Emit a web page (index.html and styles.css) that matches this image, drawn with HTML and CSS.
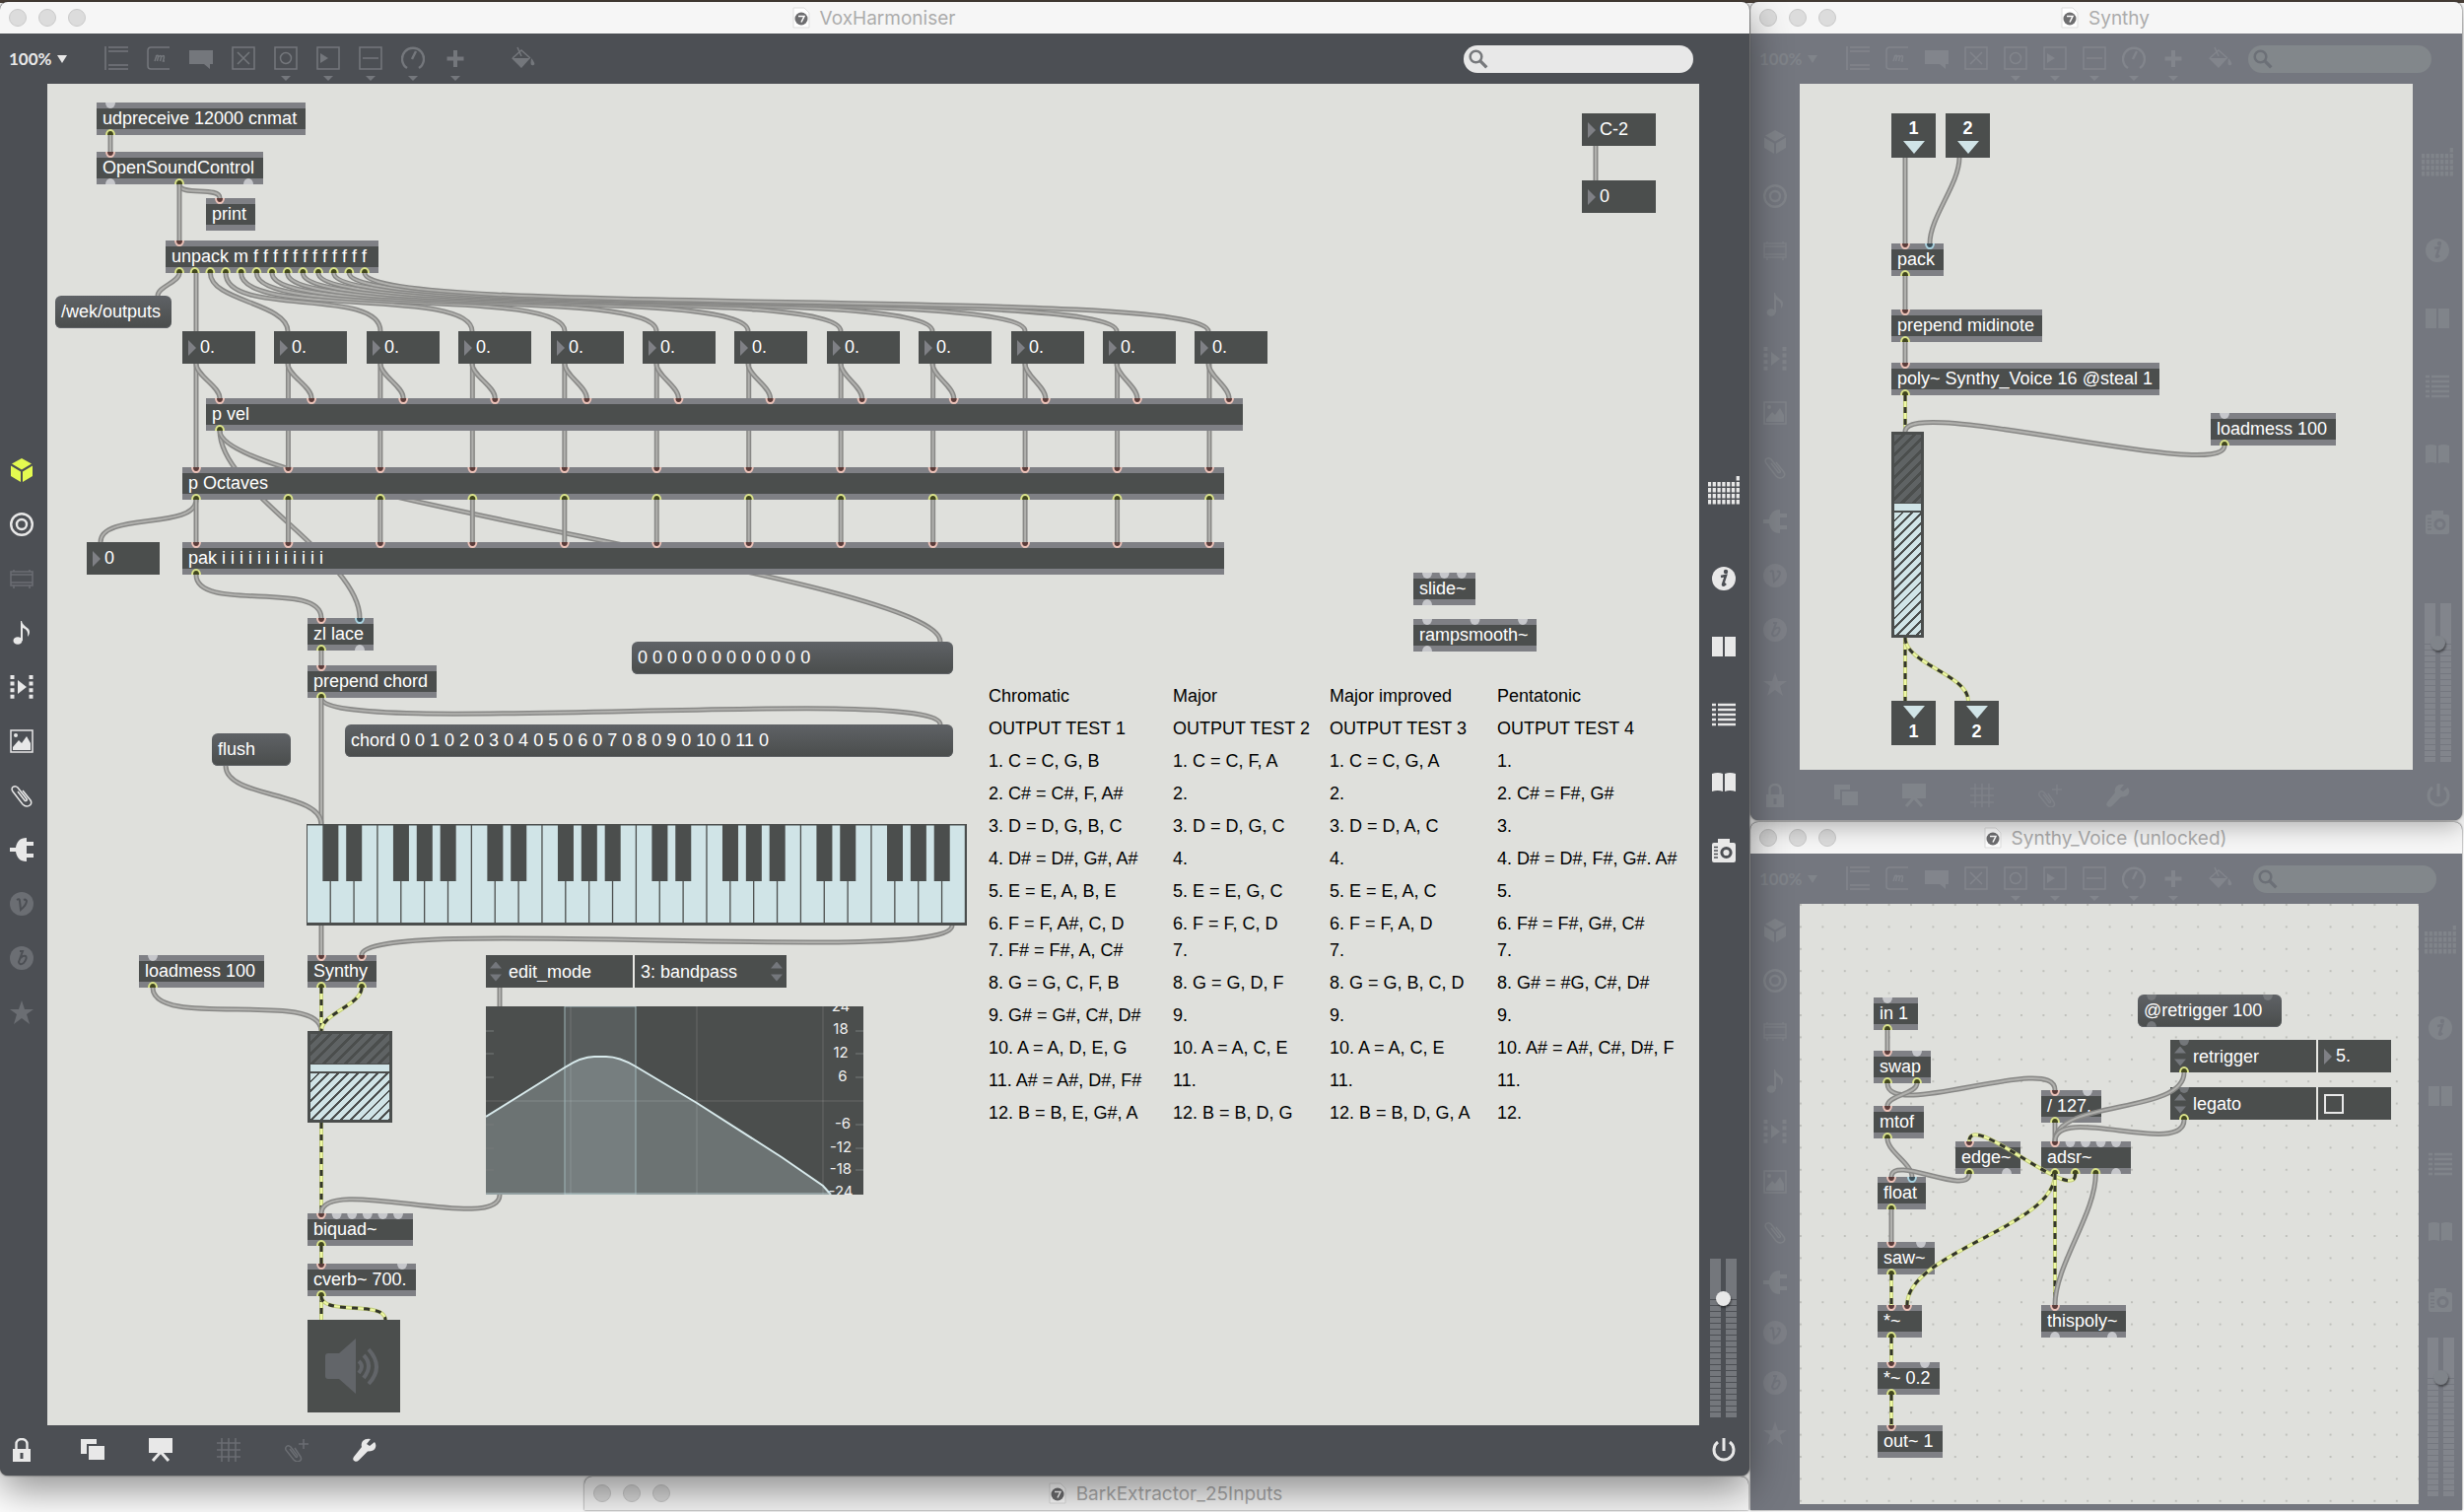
FILE: index.html
```html
<!DOCTYPE html>
<html lang="en">
<head>
    <meta charset="UTF-8">
    <meta name="viewport" content="width=device-width, initial-scale=1.0">
    <title>VoxHarmoniser</title>
    <link rel="stylesheet" href="styles.css">
</head>
<body>
    <svg class="sprite" aria-hidden="true">
        <symbol id="i-doc" viewBox="0 0 18 22"><path d="M1 1h11l5 5v15H1z" fill="#fff" stroke="#ddd"/><circle cx="9" cy="12" r="6.500" fill="#6e6e70"/><path d="M6 9.500h6l-3 6" fill="none" stroke="#fff" stroke-width="1.500"/></symbol>
        <symbol id="i-object" viewBox="0 0 24 24"><path d="M1 0v24M4 1h20M4 5h20M4 19h20M4 23h20" class="line"/></symbol>
        <symbol id="i-message" viewBox="0 0 24 24"><path d="M23 1H4a3 3 0 0 0-3 3v16a3 3 0 0 0 3 3h19M8 15l2-6M9 10q3-2 2.500 1l-1 4M11.500 11q3-3 3 0l-1 4M14.500 11q3-3 3 0l-1 4h1.500" class="line"/></symbol>
        <symbol id="i-comment" viewBox="0 0 24 24"><path d="M0 4h24v14h-3v5l-6-5H0z" fill="currentColor"/></symbol>
        <symbol id="i-toggle" viewBox="0 0 24 24"><path d="M1 1h22v22H1zM6 6l12 12M18 6L6 18" class="line"/></symbol>
        <symbol id="i-button" viewBox="0 0 24 24"><path d="M1 1h22v22H1z" class="line"/><circle cx="12" cy="12" r="5.500" class="line"/></symbol>
        <symbol id="i-number" viewBox="0 0 24 24"><path d="M1 1h22v22H1z" class="line"/><path d="M4 7l8 5-8 5z" fill="currentColor"/></symbol>
        <symbol id="i-slider" viewBox="0 0 24 24"><path d="M1 1h22v22H1zM4 12h16" class="line"/></symbol>
        <symbol id="i-dial" viewBox="0 0 24 24"><path d="M6 22A11 11 0 1 1 18 22M11 13l4-8" class="thick"/></symbol>
        <symbol id="i-plus" viewBox="0 0 24 24"><path d="M12 4v17M3.500 12.500h17" stroke="currentColor" stroke-width="4"/></symbol>
        <symbol id="i-bucket" viewBox="0 0 24 24"><path d="M0 12h19l-9 10zM20 12q5 6 2.500 7-3 1-3-2z" fill="currentColor"/><path d="M1 12l9-8 9 8M6 1l4 9" class="line"/></symbol>
        <symbol id="i-search" viewBox="0 0 24 24"><circle cx="9" cy="9" r="7" fill="none" stroke="currentColor" stroke-width="3"/><path d="M14 14l8 8" stroke="currentColor" stroke-width="4"/></symbol>

        <symbol id="i-cube" viewBox="0 0 24 24"><path d="M12 0l10 5.500-10 6-10-6zM1 7.500l10 6V24L1 18zM23 7.500l-10 6V24l10-6z" fill="currentColor"/></symbol>
        <symbol id="i-target" viewBox="0 0 24 24"><circle cx="12" cy="12" r="10.800" class="thick"/><circle cx="12" cy="12" r="5" class="thick"/></symbol>
        <symbol id="i-drawer" viewBox="0 0 24 24"><path d="M1 5h22v14H1zM1 8h22M1 16h22M4 5V3M20 5V3M4 19v3M20 19v3" class="line"/></symbol>
        <symbol id="i-note" viewBox="0 0 24 24"><ellipse cx="8" cy="20" rx="4.500" ry="3.800" fill="currentColor"/><path d="M11 20V0h1c1 6 8 6 8 11 0 2-1 4-2 5 1-6-2-8-5-9v13z" fill="currentColor"/></symbol>
        <symbol id="i-film" viewBox="0 0 24 24"><path d="M2.500 0v24M21.500 0v24" stroke="currentColor" stroke-width="4" stroke-dasharray="4 2.600"/><path d="M8 5l9 7-9 7z" fill="currentColor"/></symbol>
        <symbol id="i-image" viewBox="0 0 24 24"><path d="M1 1h22v22H1z" class="line"/><circle cx="6" cy="6" r="2" fill="currentColor"/><path d="M3 21v-3l6-7 3 3 5-7 4 7v7z" fill="currentColor"/></symbol>
        <symbol id="i-clip" viewBox="0 0 24 24"><path d="M8 8l7 9c1 1.500 3 0 2-1.500L8 4C5 1 0 4 3 8l10 13c4 4 11 1 8-4L13 7" class="line"/></symbol>
        <symbol id="i-plug" viewBox="0 0 24 24"><path d="M17 0v4h7v4h-7v8h7v4h-7v4C10 24 7 20 6 14H0v-4h6c1-6 4-10 11-10z" fill="currentColor"/></symbol>
        <symbol id="i-v" viewBox="0 0 24 24"><circle cx="12" cy="12" r="12" fill="currentColor"/><path d="M7 8q3-2 3 1l1 9q6-5 6-9-1-2-3-1" fill="none" stroke="var(--bar)" stroke-width="2"/></symbol>
        <symbol id="i-b" viewBox="0 0 24 24"><circle cx="12" cy="12" r="12" fill="currentColor"/><path d="M10 5h3L9 16q1 4 5 1 4-5 2-7-3-1-5 2" fill="none" stroke="var(--bar)" stroke-width="2"/></symbol>
        <symbol id="i-star" viewBox="0 0 24 24"><path d="M12 0l3 9h9l-7 5 3 10-8-6-8 6 3-10-7-5h9z" fill="currentColor"/></symbol>

        <symbol id="i-keypad" viewBox="0 0 32 32"><path d="M1.500 6v24M6.300 6v24M11.100 6v24M15.900 6v24M20.700 6v24M25.500 6v24M30.300 0v30" stroke="currentColor" stroke-width="3.300" stroke-dasharray="4.600 1.400"/></symbol>
        <symbol id="i-info" viewBox="0 0 24 24"><circle cx="12" cy="12" r="12" fill="currentColor"/><circle cx="14" cy="5" r="2.200" fill="var(--bar)"/><path d="M9 10l5-1-3 9q0 2 3-1" fill="none" stroke="var(--bar)" stroke-width="2.500"/></symbol>
        <symbol id="i-columns" viewBox="0 0 24 24"><path d="M0 2h11v20H0zM13 2h11v20H13z" fill="currentColor"/></symbol>
        <symbol id="i-list" viewBox="0 0 24 24"><path d="M0 2h4M6 2h18M0 7h4M6 7h18M0 12h4M6 12h18M0 17h4M6 17h18M0 22h4M6 22h18" stroke="currentColor" stroke-width="2.500"/></symbol>
        <symbol id="i-book" viewBox="0 0 24 24"><path d="M0 3q6-2 11 0v18q-5-2-11 0zM13 3q5-2 11 0v18q-6-2-11 0z" fill="currentColor"/></symbol>
        <symbol id="i-camera" viewBox="0 0 24 24"><path d="M6 0h12v4h4q2 0 2 2v16q0 2-2 2H2q-2 0-2-2V6q0-2 2-2h4z" fill="currentColor"/><circle cx="14.500" cy="14" r="4.600" fill="none" stroke="var(--bar)" stroke-width="3"/><path d="M2 8.500h4M2 12h4M2 15.500h4M2 19h4" stroke="var(--bar)" stroke-width="1.500"/></symbol>
        <symbol id="i-power" viewBox="0 0 24 24"><path d="M12 0v13M6 4a10 10 0 1 0 12 0" fill="none" stroke="currentColor" stroke-width="3"/></symbol>

        <symbol id="i-lock" viewBox="0 0 24 24"><path d="M3 11h18v13H3z" fill="currentColor"/><path d="M6.500 11V6a5.500 5 0 0 1 11 0v5" class="thick"/><path d="M12 15v6" stroke="var(--bar)" stroke-width="3"/></symbol>
        <symbol id="i-windows" viewBox="0 0 24 24"><path d="M0 1h16v5H6v10H0z" fill="currentColor"/><path d="M8 8h16v14H8z" fill="currentColor"/></symbol>
        <symbol id="i-board" viewBox="0 0 24 24"><path d="M0 0h24v15H0z" fill="currentColor"/><path d="M12 14l-8 9M12 14l8 9" stroke="currentColor" stroke-width="3"/></symbol>
        <symbol id="i-grid" viewBox="0 0 24 24"><path d="M5 0v24M12 0v24M19 0v24M0 5h24M0 12h24M0 19h24" class="line"/></symbol>
        <symbol id="i-clipplus" viewBox="0 0 24 24"><path d="M5 11l6 8c1 1 2 0 1.500-1.500L6 9C3 6 0 9 1 12l8 10c4 4 9 1 7-3L10 10M19 1v10M14 6h10" class="line"/></symbol>
        <symbol id="i-wrench" viewBox="0 0 24 24"><path d="M22 4l-5 4-3-2 4-5q-5-1-8 2-2 3-1 6L1 19q-2 3 1 4.500 2 1 4-1l9-9q7 0 8-4 1-3-1-5.500z" fill="currentColor"/></symbol>
    </svg>

    <main class="desktop">
        <section class="window bark">
            <header class="titlebar"><i class="light"></i><i class="light"></i><i class="light"></i><h2><svg class="doc"><use href="#i-doc"/></svg>BarkExtractor_25Inputs</h2></header>
        </section>

        <section class="window inactive voice" data-patch="voice">
            <header class="titlebar"><i class="light"></i><i class="light"></i><i class="light"></i><h2><svg class="doc"><use href="#i-doc"/></svg>Synthy_Voice (unlocked)</h2></header>
        </section>

        <section class="window inactive synthy" data-patch="synthy">
            <header class="titlebar"><i class="light"></i><i class="light"></i><i class="light"></i><h2><svg class="doc"><use href="#i-doc"/></svg>Synthy</h2></header>
        </section>

        <section class="window vox" data-patch="vox">
            <header class="titlebar"><i class="light"></i><i class="light"></i><i class="light"></i><h1><svg class="doc"><use href="#i-doc"/></svg>VoxHarmoniser</h1></header>
        </section>
    </main>

    <template id="notes">
        <table class="notes">
            <tr><th>Chromatic</th><th>Major</th><th>Major improved</th><th>Pentatonic</th></tr>
            <tr><td>OUTPUT TEST 1</td><td>OUTPUT TEST 2</td><td>OUTPUT TEST 3</td><td>OUTPUT TEST 4</td></tr>
            <tr><td>1. C = C, G, B</td><td>1. C = C, F, A</td><td>1. C = C, G, A</td><td>1.</td></tr>
            <tr><td>2. C# = C#, F, A#</td><td>2.</td><td>2.</td><td>2. C# = F#, G#</td></tr>
            <tr><td>3. D = D, G, B, C</td><td>3. D = D, G, C</td><td>3. D = D, A, C</td><td>3.</td></tr>
            <tr><td>4. D# = D#, G#, A#</td><td>4.</td><td>4.</td><td>4. D# = D#, F#, G#. A#</td></tr>
            <tr><td>5. E = E, A, B, E</td><td>5. E = E, G, C</td><td>5. E = E, A, C</td><td>5.</td></tr>
            <tr><td>6. F = F, A#, C, D</td><td>6. F = F, C, D</td><td>6. F = F, A, D</td><td>6. F# = F#, G#, C#</td></tr>
            <tr class="tight"><td>7. F# = F#, A, C#</td><td>7.</td><td>7.</td><td>7.</td></tr>
            <tr><td>8. G = G, C, F, B</td><td>8. G = G, D, F</td><td>8. G = G, B, C, D</td><td>8. G# = #G, C#, D#</td></tr>
            <tr><td>9. G# = G#, C#, D#</td><td>9.</td><td>9.</td><td>9.</td></tr>
            <tr><td>10. A = A, D, E, G</td><td>10. A = A, C, E</td><td>10. A = A, C, E</td><td>10. A# = A#, C#, D#, F</td></tr>
            <tr><td>11. A# = A#, D#, F#</td><td>11.</td><td>11.</td><td>11.</td></tr>
            <tr><td>12. B = B, E, G#, A</td><td>12. B = B, D, G</td><td>12. B = B, D, G, A</td><td>12.</td></tr>
        </table>
    </template>

    <template id="graph">
        <svg class="graph" viewBox="0 0 383 191" role="img" aria-label="Bandpass filter response">
            <path d="M0 112L80 62Q97 51 110 51h12Q135 51 152 61L214 98 300 153 342 182 350 191H0z" fill="#6c7373"/>
            <path d="M86 0v191M214 0v191M342 0v191M0 96h383" stroke="#fff" stroke-opacity=".16"/>
            <path d="M0 25h8M0 48h8M0 72h8M0 120h8M0 144h8M0 166h8M375 25h8M375 48h8M375 72h8M375 120h8M375 144h8M375 166h8" stroke="#777a7a"/>
            <path d="M80 0h72v191H80z" fill="#d0e4e7" fill-opacity=".1" stroke="#9fb6b9"/>
            <path d="M0 112L80 62Q97 51 110 51h12Q135 51 152 61L214 98 300 153 342 182 350 191" fill="none" stroke="#d8eaec" stroke-width="2"/>
            <path d="M0 190h350" stroke="#b9cdd0" stroke-width="1"/>
            <g class="scale">
                <text x="360" y="5">24</text><text x="360" y="28">18</text><text x="360" y="52">12</text><text x="362" y="76">6</text>
                <text x="362" y="124">-6</text><text x="360" y="148">-12</text><text x="360" y="170">-18</text><text x="360" y="193">-24</text>
            </g>
        </svg>
    </template>

    <script src="patcher.js"></script>
</body>
</html>
```
FILE: styles.css
```css
* {
    box-sizing: border-box;
}
body {
    margin: 0;
    font-family: "Liberation Sans", Arial, sans-serif;
    font-size: 18px;
    color: #fff;
}
button, input, select {
    margin: 0;
    padding: 0;
    border: none;
    background: none;
    color: inherit;
    font: inherit;
    appearance: none;
}
.sprite {
    display: none;
}
.line {
    fill: none;
    stroke: currentColor;
    stroke-width: 1.5;
}
.thick {
    fill: none;
    stroke: currentColor;
    stroke-width: 2.4;
}

/* windows */
.desktop {
    position: relative;
    height: 100vh;
    overflow: hidden;
    background: linear-gradient(#4a4038 3px, #fff 3px);
}
.window {
    --bar: #4c4f54;
    --icon: #e8e8e8;
    --faint: #6b6e73;
    --tool: #74777c;
    --search: #e8e8e8;
    --pitch: 55px;
    position: absolute;
    display: grid;
    grid-template-columns: 48px 1fr 51px;
    grid-template-rows: 32px 51px 1fr 51px;
    grid-template-areas: "title title title" "top top top" "left patch right" "bottom bottom bottom";
    background: var(--bar);
    border-radius: 8px;
    overflow: hidden;
}
.inactive {
    --bar: #74777f;
    --icon: #80848a;
    --faint: #7e8188;
    --tool: #82858c;
    --search: #82878b;
    grid-template-columns: 50px 1fr 50px;
}
.vox {
    left: 0;
    top: 2px;
    width: 71%;
    bottom: 37px;
    box-shadow: 0 0 2px #222, 0 14px 42px rgba(0, 0, 0, .45);
}
.synthy {
    left: 71.04%;
    right: 2px;
    top: 2px;
    height: 830px;
    box-shadow: 0 0 2px #333, 0 6px 24px rgba(0, 0, 0, .3);
}
.voice {
    --pitch: 51px;
    left: 71.04%;
    right: 2px;
    top: 834px;
    bottom: 2px;
    grid-template-columns: 50px 1fr 44px;
    grid-template-rows: 32px 51px 1fr 6px;
    border-radius: 8px 8px 0 0;
    box-shadow: 0 0 2px #333;
}
.bark {
    left: 593px;
    right: 29.04%;
    bottom: 2px;
    height: 34px;
    display: block;
    border-radius: 8px 8px 0 0;
    box-shadow: 0 0 2px #444;
}
.titlebar {
    grid-area: title;
    position: relative;
    display: flex;
    align-items: center;
    gap: 12px;
    height: 100%;
    padding-left: 9px;
    background: #f6f6f6;
}
.light {
    width: 18px;
    height: 18px;
    border: 1px solid #c9c9c9;
    border-radius: 50%;
    background: #dcdcdc;
}
.titlebar h1, .titlebar h2 {
    flex: 1;
    display: flex;
    justify-content: center;
    align-items: center;
    gap: 10px;
    margin: 0;
    padding-right: 101px;
    font: 19px Inter, sans-serif;
    color: #acacac;
}
.doc {
    width: 18px;
    height: 22px;
}

/* toolbars */
.top {
    grid-area: top;
    display: flex;
    align-items: center;
    padding: 0 57px 0 9px;
    color: var(--tool);
}
.inactive .top {
    padding-right: 31px;
}
.voice .top {
    padding-right: 26px;
}
.zoom {
    display: flex;
    align-items: center;
    margin-right: 28px;
    font: bold 17px Lato, sans-serif;
    color: var(--icon);
}
.inactive .zoom {
    margin-right: 21px;
}
.zoom select {
    width: 49px;
}
.tri {
    width: 0;
    border: 5px solid transparent;
    border-top: 8px solid currentColor;
    border-bottom: none;
}
.tools {
    display: flex;
}
.tool {
    position: relative;
    width: 43px;
    height: 51px;
    padding-bottom: 1px;
}
.inactive .tool {
    width: 40px;
}
.tool .tri {
    position: absolute;
    left: 50%;
    bottom: 3px;
    margin-left: -5px;
    border-top-width: 5px;
}
.icon {
    display: block;
    width: 24px;
    height: 24px;
    margin: auto;
}
.tool.bucket {
    margin-left: 26px;
}
.inactive .tool.bucket {
    margin-left: 8px;
}
.search {
    display: flex;
    flex: none;
    align-items: center;
    width: 233px;
    height: 28px;
    margin-left: auto;
    padding-left: 5px;
    border-radius: 14px;
    background: var(--search);
    color: #77797c;
}
.inactive .search {
    width: 186px;
    color: #6c7077;
}
.search svg {
    width: 20px;
    height: 20px;
}
.search input {
    flex: 1;
    min-width: 0;
}
.left, .right {
    display: flex;
    flex-direction: column;
    align-items: center;
    justify-content: center;
    min-height: 0;
    color: var(--icon);
}
.left {
    grid-area: left;
    padding-bottom: 28px;
}
.vox .left {
    padding-right: 4px;
}
.voice .left {
    padding-bottom: 46px;
}
.left button {
    height: var(--pitch);
    flex: none;
}
.right {
    grid-area: right;
    padding-bottom: 7px;
}
.vox .right {
    padding-right: 2px;
}
.panels {
    flex: 1;
    display: flex;
    flex-direction: column;
    align-items: center;
    justify-content: center;
    gap: 45px;
    padding-bottom: 5px;
}
.panels button:first-child {
    margin-bottom: 15px;
}
.panels .i-keypad {
    width: 32px;
    height: 32px;
}
.faint {
    color: var(--faint);
}
.vox .cube {
    color: #e4fa50;
}
.meter {
    position: relative;
    display: flex;
    gap: 5px;
    width: 27px;
    height: 162px;
}
.meter i {
    flex: 1;
    background: linear-gradient(var(--tool) 36px, transparent 36px), repeating-linear-gradient(var(--tool) 0 5px, var(--bar) 5px 6px);
}
.meter input, .gain input {
    position: absolute;
    inset: 0;
    width: 100%;
    height: 100%;
    opacity: 0;
    writing-mode: vertical-lr;
}
.knob {
    position: absolute;
    left: 6px;
    top: 33px;
    width: 15px;
    height: 15px;
    border-radius: 50%;
    background: var(--icon);
    box-shadow: 1px 2px 2px rgba(0, 0, 0, .4);
}
.bottom {
    grid-area: bottom;
    display: flex;
    align-items: center;
    gap: 45px;
    padding: 0 14px 1px 10px;
    color: var(--icon);
}
.inactive .bottom {
    padding: 0 12px 0 13px;
}
.voice .bottom {
    display: none;
}
.bottom button:first-child {
    margin-right: 3px;
}
.bottom button:last-child {
    margin-left: auto;
}

/* patch canvas */
.patch {
    grid-area: patch;
    position: relative;
    overflow: hidden;
    background: #dfe0dc;
}
.layer {
    position: absolute;
    inset: 0;
    width: 100%;
    height: 100%;
    pointer-events: none;
}
.cord {
    fill: none;
    stroke: #888886;
    stroke-width: 5;
}
.cord.core {
    stroke: #b0b0ad;
    stroke-width: 2;
}
.signal {
    fill: none;
    stroke: #c3cd7c;
    stroke-width: 4;
}
.signal.core {
    stroke: #eef8a4;
    stroke-width: 2;
}
.signal.dash {
    stroke: #33352b;
    stroke-width: 3;
    stroke-dasharray: 6 6;
}
.port {
    fill: #c6c7cb;
}
.port.soft {
    fill: #74777a;
}
.port.in {
    fill: #5a3c3a;
    stroke: #ecc2b8;
    stroke-width: 2;
}
.port.cold {
    fill: #3c4e58;
    stroke: #a9d3e0;
}
.port.out {
    fill: #41461f;
    stroke: #dbe48a;
    stroke-width: 2;
}
.node {
    position: absolute;
    height: 33px;
    background: #4b4e4d;
    color: #fff;
    text-align: left;
    white-space: nowrap;
}
.obj {
    padding: 0 6px;
    border: solid #7f8085;
    border-width: 6px 0;
    line-height: 21px;
}
.msg {
    padding: 0 6px;
    border-radius: 6px;
    background: linear-gradient(#5f6266, #4a4d4c);
    box-shadow: inset 0 -1px #5f6266;
}
.num, .attr {
    display: flex;
    align-items: center;
}
.num::before, .attr .value.number::before {
    content: "";
    flex: none;
    margin: 0 4px 0 6px;
    border: 8px solid transparent;
    border-left-color: #7f8085;
    border-right: none;
}
.num input, .attr .value input[type=text] {
    width: 100%;
    min-width: 0;
}
.attr::before, .attr .menu::after {
    content: "";
    flex: none;
    width: 12px;
    height: 20px;
    margin-left: 4px;
    background: #74777c;
    clip-path: polygon(50% 0, 100% 35%, 0 35%, 0 65%, 100% 65%, 50% 100%, 0 65%, 0 35%);
}
.attr .name {
    flex: 1;
    min-width: 0;
    padding-left: 7px;
}
.attr .value {
    display: flex;
    align-items: center;
    height: 100%;
    border-left: 2px solid #e8e8e4;
}
.attr .menu select {
    flex: 1;
    padding-left: 6px;
}
.attr .menu::after {
    margin-right: 4px;
}
.attr input[type=checkbox] {
    width: 20px;
    height: 20px;
    margin-left: 6px;
    border: 2px solid #e8e8e8;
}
.io {
    display: flex;
    flex-direction: column;
    align-items: center;
    justify-content: center;
    gap: 3px;
    font-weight: bold;
    line-height: 20px;
}
.io::after {
    content: "";
    border: 11px solid transparent;
    border-top: 13px solid #d0e4e7;
    border-bottom: none;
}
.io.outlet {
    flex-direction: column-reverse;
}
.gain {
    display: flex;
    flex-direction: column;
    padding: 3px;
}
.gain .off {
    height: 34%;
    background: repeating-linear-gradient(135deg, #5f6364 0 5px, #4b4e4d 5px 8px);
}
.gain .level {
    height: 7px;
    margin: 1px 0 2px;
    background: #d0e4e7;
}
.gain .on {
    flex: 1;
    background: repeating-linear-gradient(135deg, #d0e4e7 0 5px, #4b4e4d 5px 7px);
}
.keys, .filter {
    background: #4b4e4d;
}
.keys svg, .graph, .dac svg {
    display: block;
    width: 100%;
    height: 100%;
}
.scale {
    fill: #f0f0f0;
    font: 15px Inter, sans-serif;
    text-anchor: middle;
}
.dac {
    color: #626569;
}
.notes {
    position: absolute;
    border-collapse: collapse;
    table-layout: fixed;
    width: 720px;
    color: #000;
    text-align: left;
    white-space: nowrap;
}
.notes th, .notes td {
    height: 33px;
    padding: 0;
    font-weight: normal;
}
.notes th:nth-child(1) {
    width: 187px;
}
.notes th:nth-child(2) {
    width: 159px;
}
.notes th:nth-child(3) {
    width: 170px;
}
.notes .tight td {
    height: 27px;
    vertical-align: top;
}
```
FILE: patcher.js
```js
var SVG = 'http://www.w3.org/2000/svg';

// n port offsets spaced evenly between first and last
function spread(n, first, last) {
    var list = [];
    for (var i = 0; i < n; i++) list.push(first + (last - first) * i / (n - 1));
    return list;
}

var P = [14];
var twelve = spread(12, 14, 1042);

var patches = {
    vox: {
        origin: [48, 85],
        nodes: {
            udp: { type: 'obj', x: 98, y: 104, w: 212, text: 'udpreceive 12000 cnmat', ins: P, outs: P },
            osc: { type: 'obj', x: 98, y: 154, w: 169, text: 'OpenSoundControl', ins: P, outs: [14, 84, 154] },
            print: { type: 'obj', x: 209, y: 201, w: 50, text: 'print', ins: P },
            unpack: { type: 'obj', x: 168, y: 244, w: 216, text: 'unpack m f f f f f f f f f f f f', ins: P, outs: spread(13, 14, 202) },
            wek: { type: 'msg', x: 56, y: 300, w: 118, text: '/wek/outputs', ins: [104] },
            vel: { type: 'obj', x: 209, y: 404, w: 1052, text: 'p vel', ins: spread(12, 14, 1038), outs: P },
            oct: { type: 'obj', x: 185, y: 474, w: 1057, text: 'p Octaves', ins: twelve, outs: twelve },
            pak: { type: 'obj', x: 185, y: 550, w: 1057, text: 'pak i i i i i i i i i i i i', ins: twelve, outs: P },
            first: { type: 'num', x: 88, y: 550, w: 74, text: '0' },
            zl: { type: 'obj', x: 312, y: 627, w: 67, text: 'zl lace', ins: [14, 53], outs: [14, 53], cold: 1 },
            prepend: { type: 'obj', x: 312, y: 675, w: 131, text: 'prepend chord', ins: P, outs: P },
            vels: { type: 'msg', x: 641, y: 651, w: 326, text: '0 0 0 0 0 0 0 0 0 0 0 0', ins: [313] },
            chord: { type: 'msg', x: 350, y: 735, w: 617, text: 'chord 0 0 1 0 2 0 3 0 4 0 5 0 6 0 7 0 8 0 9 0 10 0 11 0', ins: [604] },
            flush: { type: 'msg', x: 215, y: 744, w: 80, text: 'flush' },
            keys: { type: 'keys', x: 311, y: 836, w: 670, h: 103, ins: [15], outs: [15, 655] },
            load: { type: 'obj', x: 141, y: 969, w: 127, text: 'loadmess 100', ins: P, outs: P },
            synthy: { type: 'obj', x: 312, y: 969, w: 70, text: 'Synthy', ins: [14, 55], outs: [14, 55] },
            gain: { type: 'gain', x: 312, y: 1046, w: 86, h: 93 },
            mode: { type: 'attr', x: 493, y: 969, w: 305, text: 'edit_mode', value: '3: bandpass', kind: 'menu', split: 156 },
            filter: { type: 'filter', x: 493, y: 1021, w: 383, h: 191 },
            biquad: { type: 'obj', x: 312, y: 1231, w: 107, text: 'biquad~', ins: spread(6, 14, 92), outs: P },
            cverb: { type: 'obj', x: 312, y: 1282, w: 110, text: 'cverb~ 700.', ins: [14, 96], outs: P },
            dac: { type: 'dac', x: 312, y: 1339, w: 94, h: 94, ins: [14, 79] },
            slide: { type: 'obj', x: 1434, y: 581, w: 63, text: 'slide~', ins: spread(3, 14, 49), outs: P },
            ramp: { type: 'obj', x: 1434, y: 628, w: 125, text: 'rampsmooth~', ins: spread(3, 14, 111), outs: P },
            pitch: { type: 'num', x: 1605, y: 115, w: 75, text: 'C-2' },
            pitchOut: { type: 'num', x: 1605, y: 183, w: 75, text: '0' },
            notes: { type: 'notes', x: 1003, y: 690 }
        },
        cords: [
            ['udp', 0, 'osc', 0], ['osc', 1, 'print', 0], ['osc', 1, 'unpack', 0], ['unpack', 0, 'wek', 0],
            ['vel', 0, 'zl', 1], ['vel', 0, 'vels', 0], ['oct', 0, 'first', 0],
            ['pak', 0, 'zl', 0], ['zl', 0, 'prepend', 0], ['prepend', 0, 'chord', 0], ['prepend', 0, 'keys', 0],
            ['flush', 0, 'keys', 0], ['keys', 0, 'synthy', 0], ['keys', 1, 'synthy', 1],
            ['load', 0, 'gain', 0], ['synthy', 0, 'gain', 0, 1], ['synthy', 1, 'gain', 0, 1],
            ['gain', 0, 'biquad', 0, 1], ['mode', 0, 'filter', 0], ['filter', 0, 'biquad', 0],
            ['biquad', 0, 'cverb', 0, 1], ['cverb', 0, 'dac', 0, 1], ['cverb', 0, 'dac', 1, 1],
            ['pitch', 0, 'pitchOut', 0]
        ]
    },
    synthy: {
        origin: [1826, 85],
        nodes: {
            in1: { type: 'io', x: 1919, y: 115, w: 45, h: 45, text: '1' },
            in2: { type: 'io', x: 1974, y: 115, w: 45, h: 45, text: '2' },
            pack: { type: 'obj', x: 1919, y: 247, w: 53, text: 'pack', ins: [14, 39], outs: P, cold: 1 },
            midi: { type: 'obj', x: 1919, y: 314, w: 153, text: 'prepend midinote', ins: P, outs: P },
            poly: { type: 'obj', x: 1919, y: 368, w: 272, text: 'poly~ Synthy_Voice 16 @steal 1', ins: P, outs: P },
            load: { type: 'obj', x: 2243, y: 419, w: 127, text: 'loadmess 100', ins: P, outs: P },
            gain: { type: 'gain', x: 1919, y: 438, w: 33, h: 209 },
            out1: { type: 'io', cls: 'outlet', x: 1919, y: 711, w: 45, h: 45, text: '1' },
            out2: { type: 'io', cls: 'outlet', x: 1983, y: 711, w: 45, h: 45, text: '2' }
        },
        cords: [
            ['in1', 0, 'pack', 0], ['in2', 0, 'pack', 1], ['pack', 0, 'midi', 0], ['midi', 0, 'poly', 0],
            ['poly', 0, 'gain', 0, 1], ['load', 0, 'gain', 0], ['gain', 0, 'out1', 0, 1], ['gain', 0, 'out2', 0, 1]
        ]
    },
    voice: {
        origin: [1826, 917],
        unlocked: true,
        nodes: {
            in1: { type: 'obj', x: 1901, y: 1012, w: 45, text: 'in 1', ins: P, outs: P },
            swap: { type: 'obj', x: 1901, y: 1066, w: 58, text: 'swap', ins: [14, 44], outs: [14, 44] },
            mtof: { type: 'obj', x: 1901, y: 1122, w: 51, text: 'mtof', ins: P, outs: P },
            div: { type: 'obj', x: 2071, y: 1106, w: 61, text: '/ 127.', ins: [14, 47], outs: P },
            edge: { type: 'obj', x: 1984, y: 1158, w: 66, text: 'edge~', ins: P, outs: [14, 52] },
            adsr: { type: 'obj', x: 2071, y: 1158, w: 91, text: 'adsr~', ins: spread(5, 14, 76), outs: spread(4, 14, 76) },
            float: { type: 'obj', x: 1905, y: 1194, w: 49, text: 'float', ins: [14, 35], outs: P, cold: 1 },
            saw: { type: 'obj', x: 1905, y: 1260, w: 58, text: 'saw~', ins: [14, 44], outs: P },
            mul: { type: 'obj', x: 1905, y: 1324, w: 45, text: '*~', ins: [14, 30], outs: P },
            amp: { type: 'obj', x: 1905, y: 1382, w: 63, text: '*~ 0.2', ins: [14, 48], outs: P },
            out: { type: 'obj', x: 1905, y: 1446, w: 66, text: 'out~ 1', ins: P },
            poly: { type: 'obj', x: 2071, y: 1324, w: 86, text: 'thispoly~', ins: P, outs: [14, 72] },
            msg: { type: 'msg', x: 2169, y: 1009, w: 146, text: '@retrigger 100', ins: [14, 132], outs: P },
            retrig: { type: 'attr', x: 2202, y: 1055, w: 224, text: 'retrigger', value: '5.', kind: 'number', split: 76, ins: P, outs: P },
            legato: { type: 'attr', x: 2202, y: 1103, w: 224, text: 'legato', kind: 'check', split: 76, ins: P, outs: P }
        },
        cords: [
            ['in1', 0, 'swap', 0], ['swap', 0, 'div', 0], ['swap', 1, 'mtof', 0], ['mtof', 0, 'float', 1],
            ['edge', 0, 'float', 0], ['float', 0, 'saw', 0], ['saw', 0, 'mul', 0, 1], ['mul', 0, 'amp', 0, 1],
            ['amp', 0, 'out', 0, 1], ['div', 0, 'adsr', 0], ['retrig', 0, 'adsr', 0], ['legato', 0, 'adsr', 0],
            ['adsr', 1, 'edge', 0, 1], ['adsr', 0, 'mul', 1, 1], ['adsr', 0, 'poly', 0, 1], ['adsr', 2, 'poly', 0]
        ]
    }
};

// the twelve float boxes between unpack, p vel and p Octaves
for (var i = 0; i < 12; i++) {
    patches.vox.nodes['f' + i] = { type: 'num', x: 185 + Math.round(i * 93.4), y: 336, w: 74, text: '0.' };
    patches.vox.cords.push(['unpack', i + 1, 'f' + i, 0], ['f' + i, 0, 'oct', i], ['f' + i, 0, 'vel', i], ['oct', i, 'pak', i]);
}

function icon(name) {
    return '<svg class="icon i-' + name + '"><use href="#i-' + name + '"/></svg>';
}

function buttons(names, faint) {
    return names.map(function (n) {
        var cls = n + (faint.indexOf(n) >= 0 ? ' faint' : '');
        return '<button class="' + cls + '" aria-label="' + n + '">' + icon(n) + '</button>';
    }).join('');
}

function chrome() {
    var menus = ['button', 'number', 'slider', 'dial', 'plus'];
    var tools = ['object', 'message', 'comment', 'toggle'].concat(menus, 'bucket').map(function (n) {
        return '<button class="tool ' + n + '" aria-label="' + n + '">' + icon(n) +
            (menus.indexOf(n) >= 0 ? '<span class="tri"></span>' : '') + '</button>';
    }).join('');
    return '<nav class="top"><label class="zoom"><select aria-label="Zoom"><option>100%</option></select><span class="tri"></span></label>' +
        '<div class="tools">' + tools + '</div>' +
        '<label class="search"><svg><use href="#i-search"/></svg><input type="text" aria-label="Search"></label></nav>' +
        '<nav class="left">' + buttons(['cube', 'target', 'drawer', 'note', 'film', 'image', 'clip', 'plug', 'v', 'b', 'star'], ['drawer', 'v', 'b', 'star']) + '</nav>' +
        '<nav class="right"><div class="panels">' + buttons(['keypad', 'info', 'columns', 'list', 'book', 'camera'], []) + '</div>' +
        '<div class="meter"><i></i><i></i><span class="knob"></span><input type="range" aria-label="Output level"></div></nav>' +
        '<nav class="bottom">' + buttons(['lock', 'windows', 'board', 'grid', 'clipplus', 'wrench', 'power'], ['grid', 'clipplus']) + '</nav>';
}

function keyboard() {
    var s = '<svg viewBox="0 0 670 103" role="img" aria-label="Keyboard">';
    var k = 23.86;
    for (var i = 0; i < 28; i++) {
        s += '<rect x="' + (i * k + 1) + '" y="1.500" width="' + (k - 1.3) + '" height="98.500" fill="#d0e4e7"/>';
    }
    for (i = 0; i < 28; i++) {
        if (i % 7 != 2 && i % 7 != 6) {
            s += '<rect x="' + ((i + 1) * k - 7.5) + '" y="0" width="16" height="58" fill="#4b4e4d"/>';
        }
    }
    return s + '</svg>';
}

function build(n) {
    var el, input = '<input type="text" value="' + (n.value || n.text) + '" aria-label="Value">';
    if (n.type == 'notes') {
        el = document.getElementById('notes').content.firstElementChild.cloneNode(true);
    } else {
        el = document.createElement({ msg: 'button', dac: 'button', num: 'label' }[n.type] || 'div');
        el.className = 'node ' + n.type + (n.cls ? ' ' + n.cls : '');
        el.style.width = n.w + 'px';
        if (n.h) el.style.height = n.h + 'px';
    }
    if (n.type == 'obj' || n.type == 'msg') el.textContent = n.text;
    if (n.type == 'io') el.innerHTML = '<span>' + n.text + '</span>';
    if (n.type == 'num') el.innerHTML = input;
    if (n.type == 'keys') el.innerHTML = keyboard();
    if (n.type == 'filter') el.appendChild(document.getElementById('graph').content.cloneNode(true));
    if (n.type == 'gain') {
        el.innerHTML = '<span class="off"></span><span class="level"></span><span class="on"></span><input type="range" aria-label="Gain">';
    }
    if (n.type == 'dac') {
        el.setAttribute('aria-label', 'Audio on/off');
        el.innerHTML = '<svg viewBox="0 0 94 94"><path d="M18 37q0-3 3-3h11l17-15v56L32 60H21q-3 0-3-3z" fill="currentColor"/>' +
            '<path d="M52 42q6 5 0 12M57 36q10 10 0 23M62 30q16 18 0 35" fill="none" stroke="currentColor" stroke-width="4"/></svg>';
    }
    if (n.type == 'attr') {
        var value = {
            menu: '<select aria-label="' + n.text + '"><option>' + n.value + '</option></select>',
            number: input,
            check: '<input type="checkbox" aria-label="' + n.text + '">'
        }[n.kind];
        el.innerHTML = '<select class="name" aria-label="Attribute"><option>' + n.text + '</option></select>' +
            '<span class="value ' + n.kind + '" style="width:' + n.split + 'px">' + value + '</span>';
    }
    return el;
}

function draw(svg, tag, cls, attrs) {
    var el = document.createElementNS(SVG, tag);
    el.setAttribute('class', cls);
    for (var key in attrs) el.setAttribute(key, attrs[key]);
    svg.appendChild(el);
}

function layer() {
    var svg = document.createElementNS(SVG, 'svg');
    svg.setAttribute('class', 'layer');
    return svg;
}

// patch cord: leaves and arrives vertically
function cord(x1, y1, x2, y2) {
    if (Math.abs(x1 - x2) < 2) return 'M' + x2 + ' ' + y1 + 'V' + y2;
    var dist = Math.hypot(x2 - x1, y2 - y1);
    var d = Math.min(dist * 0.29, 38 + Math.max(0, y2 - y1) * 0.12);
    return 'M' + x1 + ' ' + y1 + 'C' + x1 + ' ' + (y1 + d) + ' ' + x2 + ' ' + (y2 - d) + ' ' + x2 + ' ' + y2;
}

document.querySelectorAll('[data-patch]').forEach(function (win) {
    var name = win.dataset.patch;
    var patch = patches[name];
    win.insertAdjacentHTML('beforeend', chrome());
    var canvas = document.createElement('div');
    canvas.className = 'patch';
    win.appendChild(canvas);

    var ox = patch.origin[0], oy = patch.origin[1];
    var used = {};
    var under = layer(), ports = layer(), cords = patch.unlocked ? layer() : under;

    if (patch.unlocked) {
        under.innerHTML = '<pattern id="dots" width="22.4" height="22.4" patternUnits="userSpaceOnUse"><rect width="2" height="2" fill="#bfc0bb"/></pattern>' +
            '<rect width="100%" height="100%" fill="url(#dots)"/>';
    }
    canvas.appendChild(under);

    for (var id in patch.nodes) {
        var n = patch.nodes[id];
        var el = build(n);
        el.style.left = n.x - ox + 'px';
        el.style.top = n.y - oy + 'px';
        canvas.appendChild(el);
    }

    patch.cords.forEach(function (c) {
        var a = patch.nodes[c[0]], b = patch.nodes[c[2]];
        used[c[0] + 'out' + c[1]] = used[c[2] + 'in' + c[3]] = true;
        var d = cord(a.x - ox + (a.outs || P)[c[1]], a.y - oy + (a.h || 33), b.x - ox + (b.ins || P)[c[3]], b.y - oy);
        var cls = c[4] ? 'signal' : 'cord';
        draw(cords, 'path', cls, { d: d });
        draw(cords, 'path', cls + ' core', { d: d });
        if (c[4]) draw(cords, 'path', cls + ' dash', { d: d });
    });

    for (id in patch.nodes) {
        n = patch.nodes[id];
        if (n.type != 'obj' && !(patch.unlocked && n.type != 'io')) continue;
        var soft = n.type == 'obj' ? '' : ' soft';
        var top = n.y - oy, bottom = top + 33;
        (n.ins || []).forEach(function (p, i) {
            var on = used[id + 'in' + i], r = on ? 4 : 5, x = n.x - ox + p;
            var cls = 'port' + (on ? ' in' + (n.cold == i ? ' cold' : '') : soft);
            draw(ports, 'path', cls, { d: 'M' + (x - r) + ' ' + top + 'a' + r + ' ' + (r + 1) + ' 0 0 0 ' + 2 * r + ' 0' });
        });
        (n.outs || []).forEach(function (p, i) {
            var on = used[id + 'out' + i], r = on ? 4 : 5, x = n.x - ox + p;
            draw(ports, 'path', 'port' + (on ? ' out' : soft), { d: 'M' + (x - r) + ' ' + bottom + 'a' + r + ' ' + (r + 1) + ' 0 0 1 ' + 2 * r + ' 0' });
        });
    }
    if (patch.unlocked) canvas.appendChild(cords);
    canvas.appendChild(ports);
});
```
